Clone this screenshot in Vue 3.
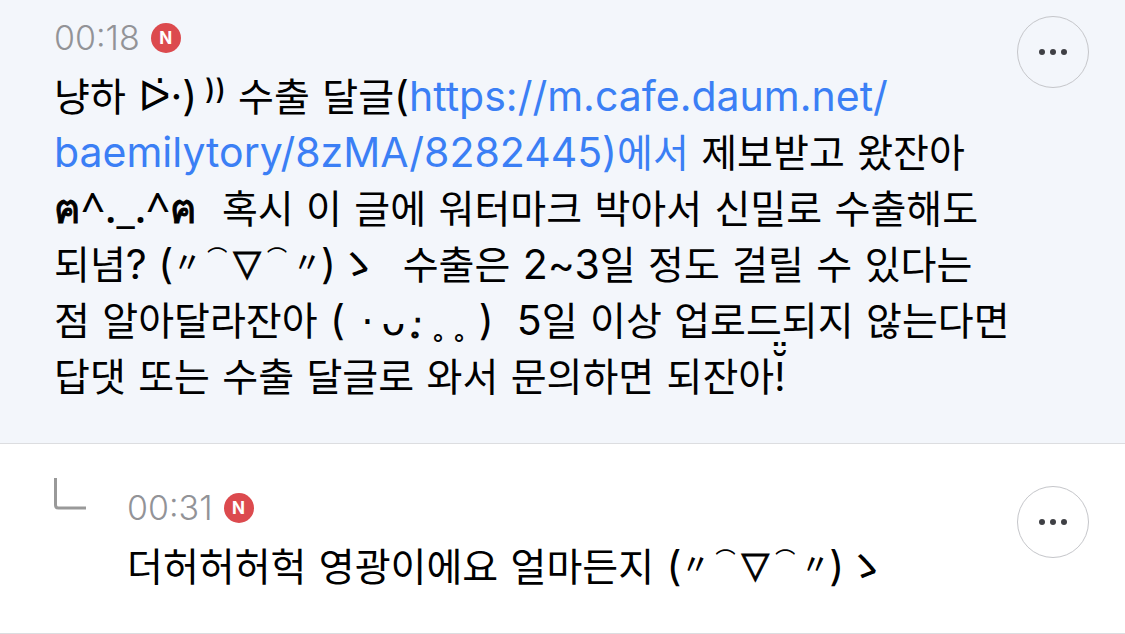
<script setup>
const link = 'https://m.cafe.daum.net/baemilytory/8zMA/8282445)에서'
</script>

<template>
  <main class="comments">
    <article class="comment">
      <div class="body">
        <header class="meta">
          <time datetime="00:18">00:18</time>
          <span class="badge">N</span>
        </header>
        <p class="text">
          냥하 <span class="play">ᐅ̇</span><span class="latin">·)</span>&thinsp;<span class="waves">))</span> 수출 달글<span class="latin">(</span><a :href="link"><span class="latin">https://m.cafe.daum.net/</span><br /><span class="latin">baemilytory/8zMA/8282445)</span>에서</a> 제보받고 왔잔아<br />
          <span class="thai">ฅ</span><span class="cat">^._.^</span><span class="thai">ฅ</span>&nbsp; 혹시 이 글에 워터마크 박아서 신밀로 수출해도<br />
          되념<span class="latin">? (</span><span class="ditto">〃</span><span class="arc">⌒</span><span class="nose">▽</span><span class="arc">⌒</span><span class="ditto">〃</span><span class="latin">)</span><span class="hand">ゝ</span>&nbsp; 수출은 <span class="latin">2~3</span>일 정도 걸릴 수 있다는<br />
          점 알아달라잔아 <span class="latin">(</span><span class="sym">&nbsp;&hairsp;·&thinsp;ᴗ&thinsp;</span><span class="tear">·̥</span><span class="sym">&thinsp;</span><span class="ring">˳&thinsp;˳</span>&nbsp;<span class="latin">)&nbsp; 5</span>일 이상 업로드되지 않는다면<br />
          답댓 또는 수출 달글로 와서 문의하면 되잔아<span class="bang">!<span class="eyes">¨</span><span class="mouth">˘</span></span>
        </p>
      </div>
      <button class="more" type="button" aria-label="더보기">
        <svg viewBox="0 0 28 6" aria-hidden="true"><circle cx="3" cy="3" r="3" /><circle cx="14" cy="3" r="3" /><circle cx="25" cy="3" r="3" /></svg>
      </button>
    </article>
    <article class="comment reply">
      <svg class="branch" viewBox="0 0 32 32" aria-hidden="true"><path d="M1.500 0V27Q1.500 30 4.500 30H32" /></svg>
      <div class="body">
        <header class="meta">
          <time datetime="00:31">00:31</time>
          <span class="badge">N</span>
        </header>
        <p class="text">
          더허허허헉 영광이에요 얼마든지 <span class="latin">(</span><span class="ditto">〃</span><span class="arc">⌒</span><span class="nose">▽</span><span class="arc">⌒</span><span class="ditto">〃</span><span class="latin">)</span><span class="hand">ゝ</span>
        </p>
      </div>
      <button class="more" type="button" aria-label="더보기">
        <svg viewBox="0 0 28 6" aria-hidden="true"><circle cx="3" cy="3" r="3" /><circle cx="14" cy="3" r="3" /><circle cx="25" cy="3" r="3" /></svg>
      </button>
    </article>
  </main>
</template>

<style>
body {
  margin: 0;
  background: #fff;
}
</style>

<style scoped>
.comments {
  color: #000;
  font-family: "DejaVu Sans", "Noto Sans CJK KR", sans-serif;
}
.comment {
  display: flex;
  align-items: flex-start;
  padding: 16px 36px 37px 54px;
  background: #f3f6fb;
  border-bottom: 1px solid #dcdde0;
}
.reply {
  padding-top: 42px;
  background: #fff;
}
.body {
  flex: 1;
  min-width: 0;
}
.meta {
  display: flex;
  align-items: center;
  gap: 11px;
  height: 44px;
}
time {
  color: #929397;
  font: 300 34px/44px Inter, sans-serif;
}
.badge {
  width: 30px;
  height: 30px;
  border-radius: 50%;
  background: #dc4a4e;
  color: #fff;
  font: 700 17px/30px Inter, sans-serif;
  text-align: center;
}
.text {
  margin: 10px 0 0;
  font-size: 39px;
  line-height: 56px;
  white-space: nowrap;
}
.text span {
  line-height: 1;
}
.latin {
  font-family: Inter, "DejaVu Sans", sans-serif;
  font-size: 41px;
}
.play {
  font-size: 42px;
}
.thai {
  font-size: 40px;
  -webkit-text-stroke: 1px currentColor;
}
.cat {
  font-family: "Noto Sans", sans-serif;
  font-size: 42px;
  font-weight: 500;
}
.waves {
  font-family: Inter, sans-serif;
  font-size: 28px;
  font-weight: 500;
  vertical-align: 12px;
}
.ditto,
.arc,
.hand {
  font-family: "Noto Sans CJK JP", sans-serif;
}
.ditto {
  font-size: 28px;
  font-weight: 500;
  vertical-align: 6px;
}
.arc {
  padding: 0 6px;
  font-size: 20px;
  font-weight: 500;
  vertical-align: 14px;
}
.nose {
  font-size: 36px;
  vertical-align: 4px;
  -webkit-text-stroke: 1px currentColor;
}
.hand {
  font-size: 42px;
}
.tear,
.ring {
  font-size: 30px;
}
.tear {
  vertical-align: 4px;
  -webkit-text-stroke: 1px currentColor;
}
.bang {
  position: relative;
  display: inline-block;
  font-family: Inter, sans-serif;
}
.eyes,
.mouth {
  position: absolute;
  left: 50%;
  transform: translateX(-50%);
  font-family: "DejaVu Sans", sans-serif;
  font-size: 40px;
}
.eyes {
  top: -18px;
}
.mouth {
  top: -9px;
}
a {
  color: #3b7ff5;
  text-decoration: none;
}
.branch {
  width: 32px;
  height: 32px;
  margin: -8px 41px 0 0;
}
.branch path {
  fill: none;
  stroke: #999;
  stroke-width: 3;
}
.more {
  display: grid;
  place-items: center;
  flex: none;
  width: 72px;
  height: 72px;
  padding: 0;
  background: transparent;
  border: 1px solid #c5c6ca;
  border-radius: 50%;
}
.more svg {
  width: 28px;
  height: 6px;
  fill: #3f4045;
}
</style>
